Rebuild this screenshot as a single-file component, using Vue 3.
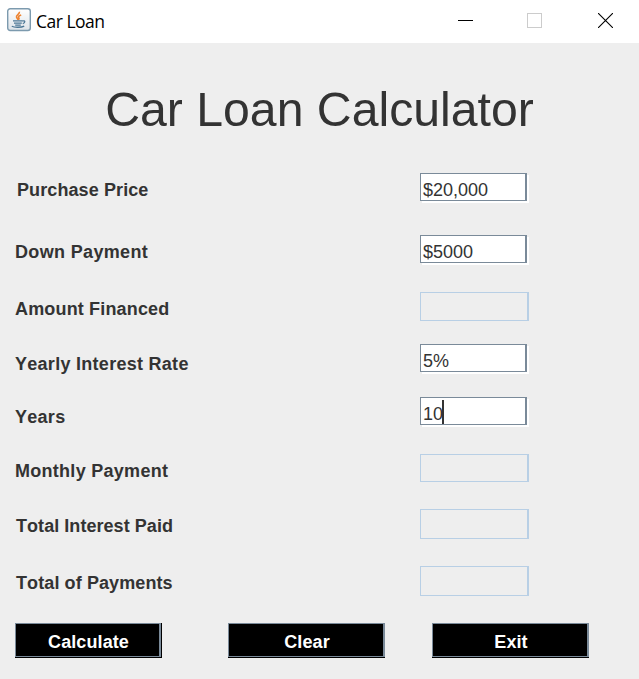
<script setup>
import { ref } from 'vue'

const rows = ref([
  { label: 'Purchase Price', value: '$20,000', kind: 'edit', cls: 'r-purchase' },
  { label: 'Down Payment', value: '$5000', kind: 'edit', cls: 'r-down' },
  { label: 'Amount Financed', value: '', kind: 'locked', cls: 'r-amount' },
  { label: 'Yearly Interest Rate', value: '5%', kind: 'edit', cls: 'r-rate' },
  { label: 'Years', value: '10', kind: 'edit', caret: true, cls: 'r-years' },
  { label: 'Monthly Payment', value: '', kind: 'locked', cls: 'r-monthly' },
  { label: 'Total Interest Paid', value: '', kind: 'locked', cls: 'r-interest' },
  { label: 'Total of Payments', value: '', kind: 'locked', cls: 'r-total' },
])
</script>

<template>
  <div class="window">
    <header class="titlebar">
      <svg class="app-icon" width="24" height="24" viewBox="0 0 24 24">
        <defs>
          <linearGradient id="tile" x1="0" y1="0" x2="0" y2="1">
            <stop offset="0" stop-color="#ffffff" />
            <stop offset="1" stop-color="#dde3e8" />
          </linearGradient>
        </defs>
        <rect x="0.7" y="0.7" width="22.6" height="21.8" rx="2.5" fill="url(#tile)" stroke="#7c9aae" stroke-width="1.4" />
        <path d="M12.4 3.8c.6 2.3-3.6 3.2-2.9 5.2.3 1 1.3 1.6 1.5 2.8M14.2 7c-2.8 1-3.2 2-2.2 3.2.4.6 0 1-.6 1.5" fill="none" stroke="#ee8432" stroke-width="1.6" />
        <path d="M6 12.9H15.6M7 15.2H14.8M8.2 17.1H13.8M15.6 13c2.8-.9 3 1.6.2 2.6M4.8 18.3c2.4 1.3 9.6 1.3 12.4-.2" fill="none" stroke="#4c7795" stroke-width="1.3" />
      </svg>
      <span class="caption">Car Loan</span>
      <div class="controls">
        <svg width="15" height="15" viewBox="0 0 15 15" shape-rendering="crispEdges"><path d="M0 7.5H15" stroke="#000" /></svg>
        <svg width="15" height="15" viewBox="0 0 15 15"><rect x=".5" y=".5" width="14" height="14" fill="none" stroke="#ccc" /></svg>
        <svg width="15" height="15" viewBox="0 0 15 15"><path d="M0 0L15 15M15 0L0 15" stroke="#000" stroke-width="1.1" /></svg>
      </div>
    </header>
    <h1>Car Loan Calculator</h1>
    <form class="form" @submit.prevent>
      <div v-for="row in rows" :key="row.label" class="row" :class="row.cls">
        <label>{{ row.label }}</label>
        <div class="field" :class="row.kind">
          <span>{{ row.value }}</span><i v-if="row.caret" class="caret"></i>
        </div>
      </div>
    </form>
    <footer class="actions">
      <button class="btn calc">Calculate</button>
      <button class="btn clear">Clear</button>
      <button class="btn exit">Exit</button>
    </footer>
  </div>
</template>

<style>
body { margin: 0; background: #eee; overflow: hidden; }
</style>

<style scoped>
.window {
  box-sizing: border-box;
  width: 639px;
  height: 679px;
  background: #eee;
  color: #333;
  font-family: "Liberation Sans", Arial, sans-serif;
  font-size: 18px;
  line-height: 20px;
  font-kerning: none;
}
.titlebar {
  box-sizing: border-box;
  display: flex;
  height: 43px;
  padding: 8px 26px 0 7px;
  background: #fff;
}
.app-icon { flex: none; }
.caption {
  margin: 1px 0 0 5px;
  color: #000;
  font: 17.5px/24px "Open Sans", "Noto Sans", sans-serif;
  letter-spacing: -0.5px;
  white-space: nowrap;
}
.controls {
  display: flex;
  gap: 54px;
  margin-left: auto;
  padding-top: 5px;
}
.controls svg:last-child { margin-left: 2px; }
h1 {
  margin: 0;
  padding: 39px 0 0 0;
  height: 91px;
  text-align: center;
  font-size: 48.2px;
  line-height: 55px;
  font-weight: 400;
  white-space: nowrap;
}
.form { display: flex; flex-direction: column; }
.row { display: flex; align-items: flex-start; padding-left: 15px; }
label {
  box-sizing: border-box;
  width: 405px;
  padding-top: 7px;
  font-weight: 700;
  letter-spacing: 0.1px;
  white-space: nowrap;
}
.field { box-sizing: border-box; display: flex; height: 28px; }
.edit {
  width: 107px;
  padding: 6px 0 0 2px;
  background: #fff;
  border: 1px solid #7a8a99;
  border-right-width: 2px;
  box-shadow: 2px 2px 0 #fff;
}
.locked {
  width: 109px;
  border: 1px solid #b8cfe5;
  border-right-width: 2px;
}
.caret { width: 2px; height: 24px; margin: -4px 0 0 -1px; background: #333; }
.r-purchase { height: 62px; }
.r-purchase label { padding-left: 2px; }
.r-down { height: 57px; }
.r-down label { letter-spacing: 0.34px; }
.r-amount { height: 52px; }
.r-amount label { letter-spacing: 0.16px; }
.r-amount .field { height: 29px; }
.r-rate { height: 53px; }
.r-rate label, .r-years label { padding-top: 10px; letter-spacing: 0.28px; }
.r-years { height: 57px; }
.r-monthly { height: 55px; }
.r-monthly label { letter-spacing: 0.28px; }
.r-interest { height: 57px; }
.r-total { height: 57px; }
.r-interest .field, .r-total .field { height: 30px; }
.r-interest label, .r-total label { padding-left: 1px; }
.r-interest label { letter-spacing: 0.05px; }
.actions { display: flex; padding-left: 15px; }
.btn {
  box-sizing: border-box;
  width: 157px;
  height: 34px;
  margin: 0;
  padding: 3px 0 0 2px;
  background: #000;
  border: 1px solid #7a8a99;
  border-right-width: 2px;
  border-radius: 0;
  box-shadow: 0 1px 0 #000;
  color: #fff;
  font: 700 18px/20px "Liberation Sans", Arial, sans-serif;
  letter-spacing: 0.1px;
}
.calc { width: 146px; margin-right: 67px; box-shadow: 1px 1px 0 #000, 0 1px 0 #000, 1px 0 0 #000; }
.clear { margin-right: 47px; }
</style>
